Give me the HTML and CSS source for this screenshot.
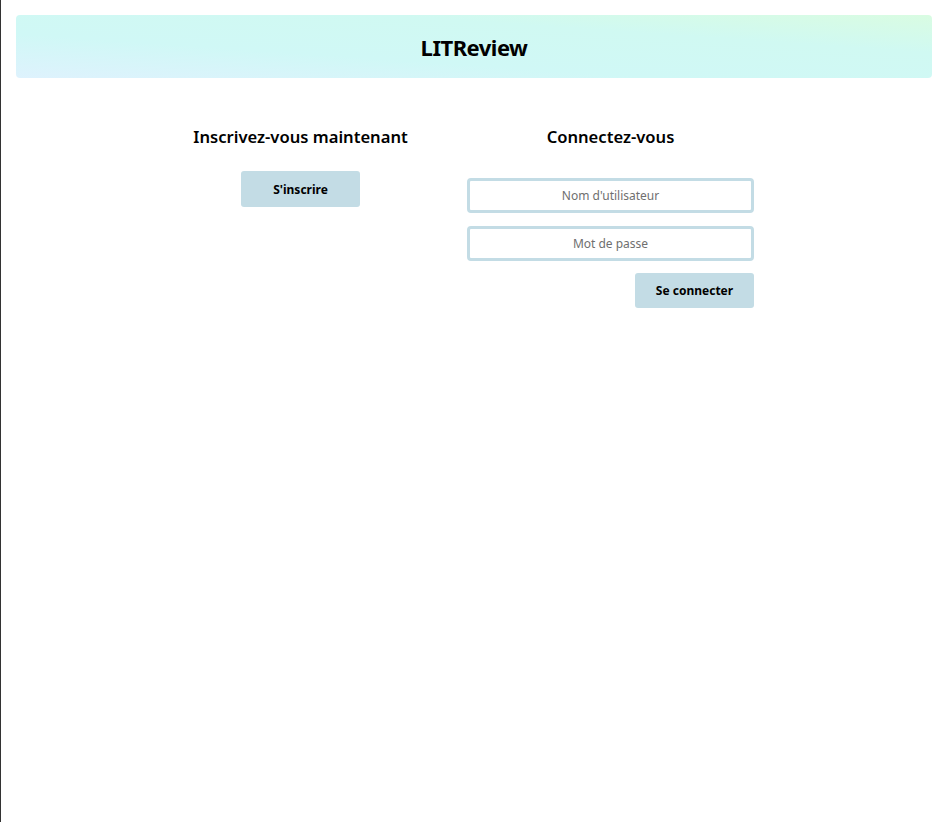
FILE: index.html
```html
<!DOCTYPE html>
<html lang="fr">
<head>
<meta charset="utf-8">
<title>LITReview</title>
<link rel="stylesheet" href="styles.css">
</head>
<body>
<header class="banner">
  <h1 class="brand">LITReview</h1>
</header>
<main class="auth">
  <section class="col col-signup">
    <h2 class="col-title">Inscrivez-vous maintenant</h2>
    <button class="btn" type="button">S'inscrire</button>
  </section>
  <section class="col col-login">
    <h2 class="col-title">Connectez-vous</h2>
    <form class="login-form">
      <input class="field" type="text" placeholder="Nom d'utilisateur">
      <input class="field" type="password" placeholder="Mot de passe">
      <button class="btn btn-right" type="button">Se connecter</button>
    </form>
  </section>
</main>
</body>
</html>
```
FILE: styles.css
```css
html {
  border-left: 1px solid #333;
  min-height: 100%;
  box-sizing: border-box;
}
body {
  margin: 15px 12px 8px 15px;
  font-family: "Noto Sans", "Open Sans", sans-serif;
  color: #000;
}
.banner {
  height: 63px;
  border-radius: 4px;
  background: linear-gradient(to top right, #def2fd 0%, #d0f8f6 35%, #d0f9f2 70%, #d9fce2 100%);
  display: flex;
  align-items: center;
  justify-content: center;
}
.brand {
  margin: 0;
  font-size: 22px;
  font-weight: 700;
  letter-spacing: -0.5px;
}
.auth {
  display: flex;
  justify-content: center;
  gap: 23px;
  padding-right: 37px;
  margin-top: 48px;
}
.col {
  width: 287px;
  display: flex;
  flex-direction: column;
  align-items: center;
}
.col-title {
  margin: 0;
  font-size: 16.6px;
  font-weight: 600;
  line-height: 22px;
}
.col-signup .btn {
  margin-top: 23px;
}
.login-form {
  width: 100%;
  margin-top: 30px;
  display: flex;
  flex-direction: column;
  gap: 13px;
}
.field {
  box-sizing: border-box;
  width: 100%;
  height: 35px;
  border: 3px solid #c3dce5;
  border-radius: 4px;
  text-align: center;
  font-family: inherit;
  font-size: 12px;
  outline: none;
}
.field::placeholder {
  color: #6f6f6f;
}
.btn {
  width: 119px;
  height: 36px;
  border: none;
  border-radius: 3px;
  background: #c3dce5;
  font-family: inherit;
  font-size: 12px;
  font-weight: 700;
  color: #000;
}
.btn-right {
  align-self: flex-end;
  height: 35px;
  margin-top: -1px;
}
```
